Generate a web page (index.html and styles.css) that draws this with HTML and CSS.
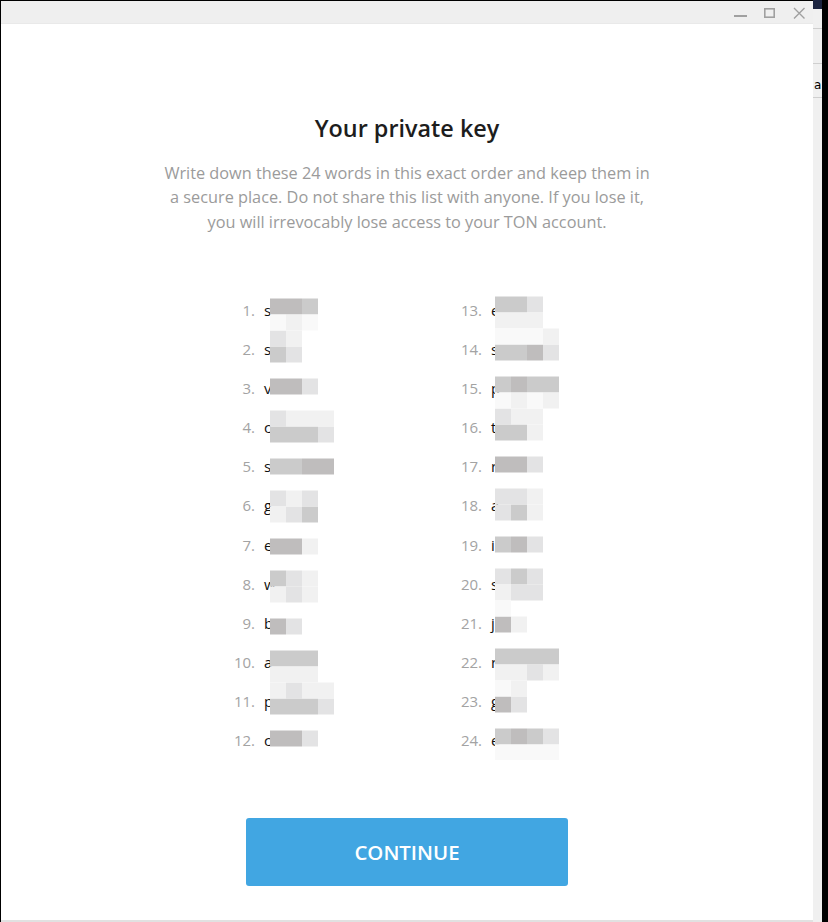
FILE: index.html
```html
<!DOCTYPE html>
<html>
<head>
<meta charset="utf-8">
<title>Your private key</title>
<link rel="stylesheet" href="styles.css">
</head>
<body>
<div class="screen">
  <div class="window">
    <div class="titlebar">
      <svg class="controls" width="90" height="23" viewBox="723 0 90 23">
        <rect x="734" y="14" width="13" height="2" fill="#a0a0a0"/>
        <rect x="764.8" y="7.8" width="9.4" height="8.4" fill="none" stroke="#a0a0a0" stroke-width="1.6"/>
        <path d="M794 7 L804.5 17.5 M804.5 7 L794 17.5" stroke="#a0a0a0" stroke-width="1.4" fill="none"/>
      </svg>
    </div>
    <div class="content">
      <h1 class="title">Your private key</h1>
      <p class="desc">Write down these 24 words in this exact order and keep them in<br>a secure place. Do not share this list with anyone. If you lose it,<br>you will irrevocably lose access to your TON account.</p>
      <div class="words">
        <div class="col">
          <ol class="list">
            <li><span class="num">1.</span><span class="w">s</span></li>
            <li><span class="num">2.</span><span class="w">s</span></li>
            <li><span class="num">3.</span><span class="w">v</span></li>
            <li><span class="num">4.</span><span class="w">c</span></li>
            <li><span class="num">5.</span><span class="w">s</span></li>
            <li><span class="num">6.</span><span class="w">g</span></li>
            <li><span class="num">7.</span><span class="w">e</span></li>
            <li><span class="num">8.</span><span class="w">w</span></li>
            <li><span class="num">9.</span><span class="w">b</span></li>
            <li><span class="num">10.</span><span class="w">a</span></li>
            <li><span class="num">11.</span><span class="w">p</span></li>
            <li><span class="num">12.</span><span class="w">c</span></li>
          </ol>
          <svg class="pixelate" width="227" height="470" viewBox="225 290.5 227 470">
            <g class="d"><rect x="270" y="299" width="32" height="16"/><rect x="270" y="379" width="32" height="16"/><rect x="302" y="459" width="32" height="16"/><rect x="270" y="539" width="32" height="16"/><rect x="270" y="619" width="16" height="16"/><rect x="270" y="731" width="32" height="16"/></g>
            <g class="m"><rect x="302" y="299" width="16" height="16"/><rect x="270" y="347" width="16" height="16"/><rect x="270" y="427" width="48" height="16"/><rect x="270" y="459" width="32" height="16"/><rect x="302" y="507" width="16" height="16"/><rect x="270" y="571" width="16" height="16"/><rect x="270" y="651" width="48" height="16"/><rect x="270" y="699" width="48" height="16"/></g>
            <g class="l"><rect x="270" y="331" width="16" height="16"/><rect x="286" y="347" width="16" height="16"/><rect x="302" y="379" width="16" height="16"/><rect x="270" y="411" width="16" height="16"/><rect x="318" y="427" width="16" height="16"/><rect x="270" y="491" width="16" height="16"/><rect x="302" y="491" width="16" height="16"/><rect x="286" y="507" width="16" height="16"/><rect x="286" y="571" width="16" height="16"/><rect x="286" y="587" width="16" height="16"/><rect x="286" y="619" width="16" height="16"/><rect x="286" y="683" width="16" height="16"/><rect x="318" y="699" width="16" height="16"/><rect x="302" y="731" width="16" height="16"/></g>
            <g class="x"><rect x="286" y="315" width="16" height="16"/><rect x="286" y="331" width="16" height="16"/><rect x="286" y="411" width="48" height="16"/><rect x="286" y="491" width="16" height="16"/><rect x="270" y="507" width="16" height="16"/><rect x="302" y="539" width="16" height="16"/><rect x="302" y="571" width="16" height="16"/><rect x="270" y="587" width="16" height="16"/><rect x="302" y="587" width="16" height="16"/><rect x="270" y="667" width="48" height="16"/><rect x="270" y="683" width="16" height="16"/><rect x="302" y="683" width="32" height="16"/></g>
            <g class="v"><rect x="270" y="315" width="16" height="16"/><rect x="302" y="315" width="16" height="16"/></g>
          </svg>
        </div>
        <div class="col">
          <ol class="list" start="13">
            <li><span class="num">13.</span><span class="w">e</span></li>
            <li><span class="num">14.</span><span class="w">s</span></li>
            <li><span class="num">15.</span><span class="w">p</span></li>
            <li><span class="num">16.</span><span class="w">t</span></li>
            <li><span class="num">17.</span><span class="w">r</span></li>
            <li><span class="num">18.</span><span class="w">a</span></li>
            <li><span class="num">19.</span><span class="w">i</span></li>
            <li><span class="num">20.</span><span class="w">s</span></li>
            <li><span class="num">21.</span><span class="w">j</span></li>
            <li><span class="num">22.</span><span class="w">r</span></li>
            <li><span class="num">23.</span><span class="w">g</span></li>
            <li><span class="num">24.</span><span class="w">e</span></li>
          </ol>
          <svg class="pixelate" width="227" height="470" viewBox="452 290.5 227 470">
            <g class="d"><rect x="527" y="345" width="16" height="16"/><rect x="511" y="377" width="16" height="16"/><rect x="495" y="457" width="32" height="16"/><rect x="511" y="537" width="16" height="16"/><rect x="495" y="617" width="16" height="16"/><rect x="495" y="697" width="16" height="16"/><rect x="511" y="729" width="16" height="16"/></g>
            <g class="m"><rect x="495" y="297" width="32" height="16"/><rect x="495" y="345" width="32" height="16"/><rect x="495" y="377" width="16" height="16"/><rect x="527" y="377" width="32" height="16"/><rect x="495" y="425" width="32" height="16"/><rect x="511" y="505" width="16" height="16"/><rect x="495" y="537" width="16" height="16"/><rect x="511" y="569" width="16" height="16"/><rect x="495" y="649" width="64" height="16"/><rect x="495" y="729" width="16" height="16"/><rect x="527" y="729" width="16" height="16"/></g>
            <g class="l"><rect x="527" y="297" width="16" height="16"/><rect x="543" y="345" width="16" height="16"/><rect x="495" y="409" width="16" height="16"/><rect x="527" y="457" width="16" height="16"/><rect x="495" y="489" width="32" height="16"/><rect x="495" y="505" width="16" height="16"/><rect x="527" y="537" width="16" height="16"/><rect x="495" y="569" width="16" height="16"/><rect x="527" y="569" width="16" height="16"/><rect x="511" y="585" width="32" height="16"/><rect x="527" y="665" width="16" height="16"/><rect x="511" y="697" width="16" height="16"/><rect x="543" y="729" width="16" height="16"/></g>
            <g class="x"><rect x="495" y="313" width="48" height="16"/><rect x="543" y="329" width="16" height="16"/><rect x="511" y="393" width="16" height="16"/><rect x="543" y="393" width="16" height="16"/><rect x="511" y="409" width="32" height="16"/><rect x="527" y="425" width="16" height="16"/><rect x="527" y="489" width="16" height="16"/><rect x="527" y="505" width="16" height="16"/><rect x="495" y="585" width="16" height="16"/><rect x="511" y="617" width="16" height="16"/><rect x="495" y="665" width="32" height="16"/><rect x="543" y="665" width="16" height="16"/><rect x="511" y="681" width="16" height="16"/></g>
            <g class="v"><rect x="495" y="329" width="48" height="16"/><rect x="495" y="393" width="16" height="16"/><rect x="527" y="393" width="16" height="16"/><rect x="495" y="601" width="16" height="16"/><rect x="495" y="681" width="16" height="16"/><rect x="495" y="745" width="64" height="16"/></g>
          </svg>
        </div>
      </div>
      <button class="continue" type="button">CONTINUE</button>
    </div>
  </div>
  <div class="side">
    <div class="side-top"></div>
    <div class="side-row r1"></div>
    <div class="side-row r2"></div>
    <div class="side-row r3"><span class="side-a">a</span></div>
  </div>
</div>
</body>
</html>
```

FILE: styles.css
```css
* { box-sizing: border-box; }

html, body {
  margin: 0;
  padding: 0;
  background: #000;
  overflow: hidden;
}

body {
  width: 828px;
  height: 922px;
  font-family: "Open Sans", "Noto Sans", sans-serif;
}

.screen {
  display: flex;
  align-items: flex-start;
  height: 922px;
}

.window {
  width: 812px;
  height: 921px;
  margin: 1px 0 0 1px;
  background: #fff;
  display: flex;
  flex-direction: column;
  border-bottom: 2px solid #e1e1e1;
}

.titlebar {
  height: 23px;
  flex: none;
  background: #efefef;
  border-bottom: 1px solid #e9e9e9;
  display: flex;
  justify-content: flex-end;
}

.controls { display: block; }

.content {
  flex: 1;
  display: flex;
  flex-direction: column;
  align-items: center;
  padding-top: 89px;
}

.title {
  margin: 0;
  font-size: 23.4px;
  font-weight: 600;
  line-height: 30px;
  color: #1d1d1d;
}

.desc {
  margin: 17.75px 0 0;
  font-size: 16.3px;
  line-height: 24.5px;
  color: #9b9b9b;
  text-align: center;
}

.words {
  align-self: flex-start;
  margin: 56.2px 0 0 224px;
  display: flex;
}

.col {
  position: relative;
  width: 227px;
}

.list {
  list-style: none;
  margin: 0;
  padding: 0;
}

.list li {
  height: 39.1px;
  display: flex;
  align-items: center;
  font-size: 15px;
}

.num {
  width: 30px;
  text-align: right;
  color: #a3a3a3;
}

.w {
  margin-left: 9px;
  color: #111;
}

.pixelate {
  position: absolute;
  top: 0;
  left: 0;
  pointer-events: none;
}

.pixelate .d { fill: #bfbdbd; }
.pixelate .m { fill: #cbcbcb; }
.pixelate .l { fill: #e3e3e4; }
.pixelate .x { fill: #f1f1f1; }
.pixelate .v { fill: #f9f9f9; }

.continue {
  margin-top: 58.35px;
  width: 322px;
  height: 68px;
  border: none;
  border-radius: 3px;
  background: #41a6e2;
  color: #fff;
  font-family: "Open Sans", "Noto Sans", sans-serif;
  font-size: 20.4px;
  font-weight: 600;
  padding: 0;
}

.side {
  width: 9px;
  height: 922px;
  background: #f0f0f0;
  display: flex;
  flex-direction: column;
}

.side-top {
  height: 9px;
  background: #1b2440;
}

.side-row {
  border-bottom: 1px solid #cfcfcf;
}

.r1 { height: 20px; }
.r2 { height: 35px; }
.r3 {
  height: 34px;
  display: flex;
  align-items: flex-end;
  padding-bottom: 6px;
}

.side-a {
  font-family: "DejaVu Sans", sans-serif;
  font-size: 12px;
  line-height: 12px;
  color: #000;
  margin-left: 1px;
}
```
